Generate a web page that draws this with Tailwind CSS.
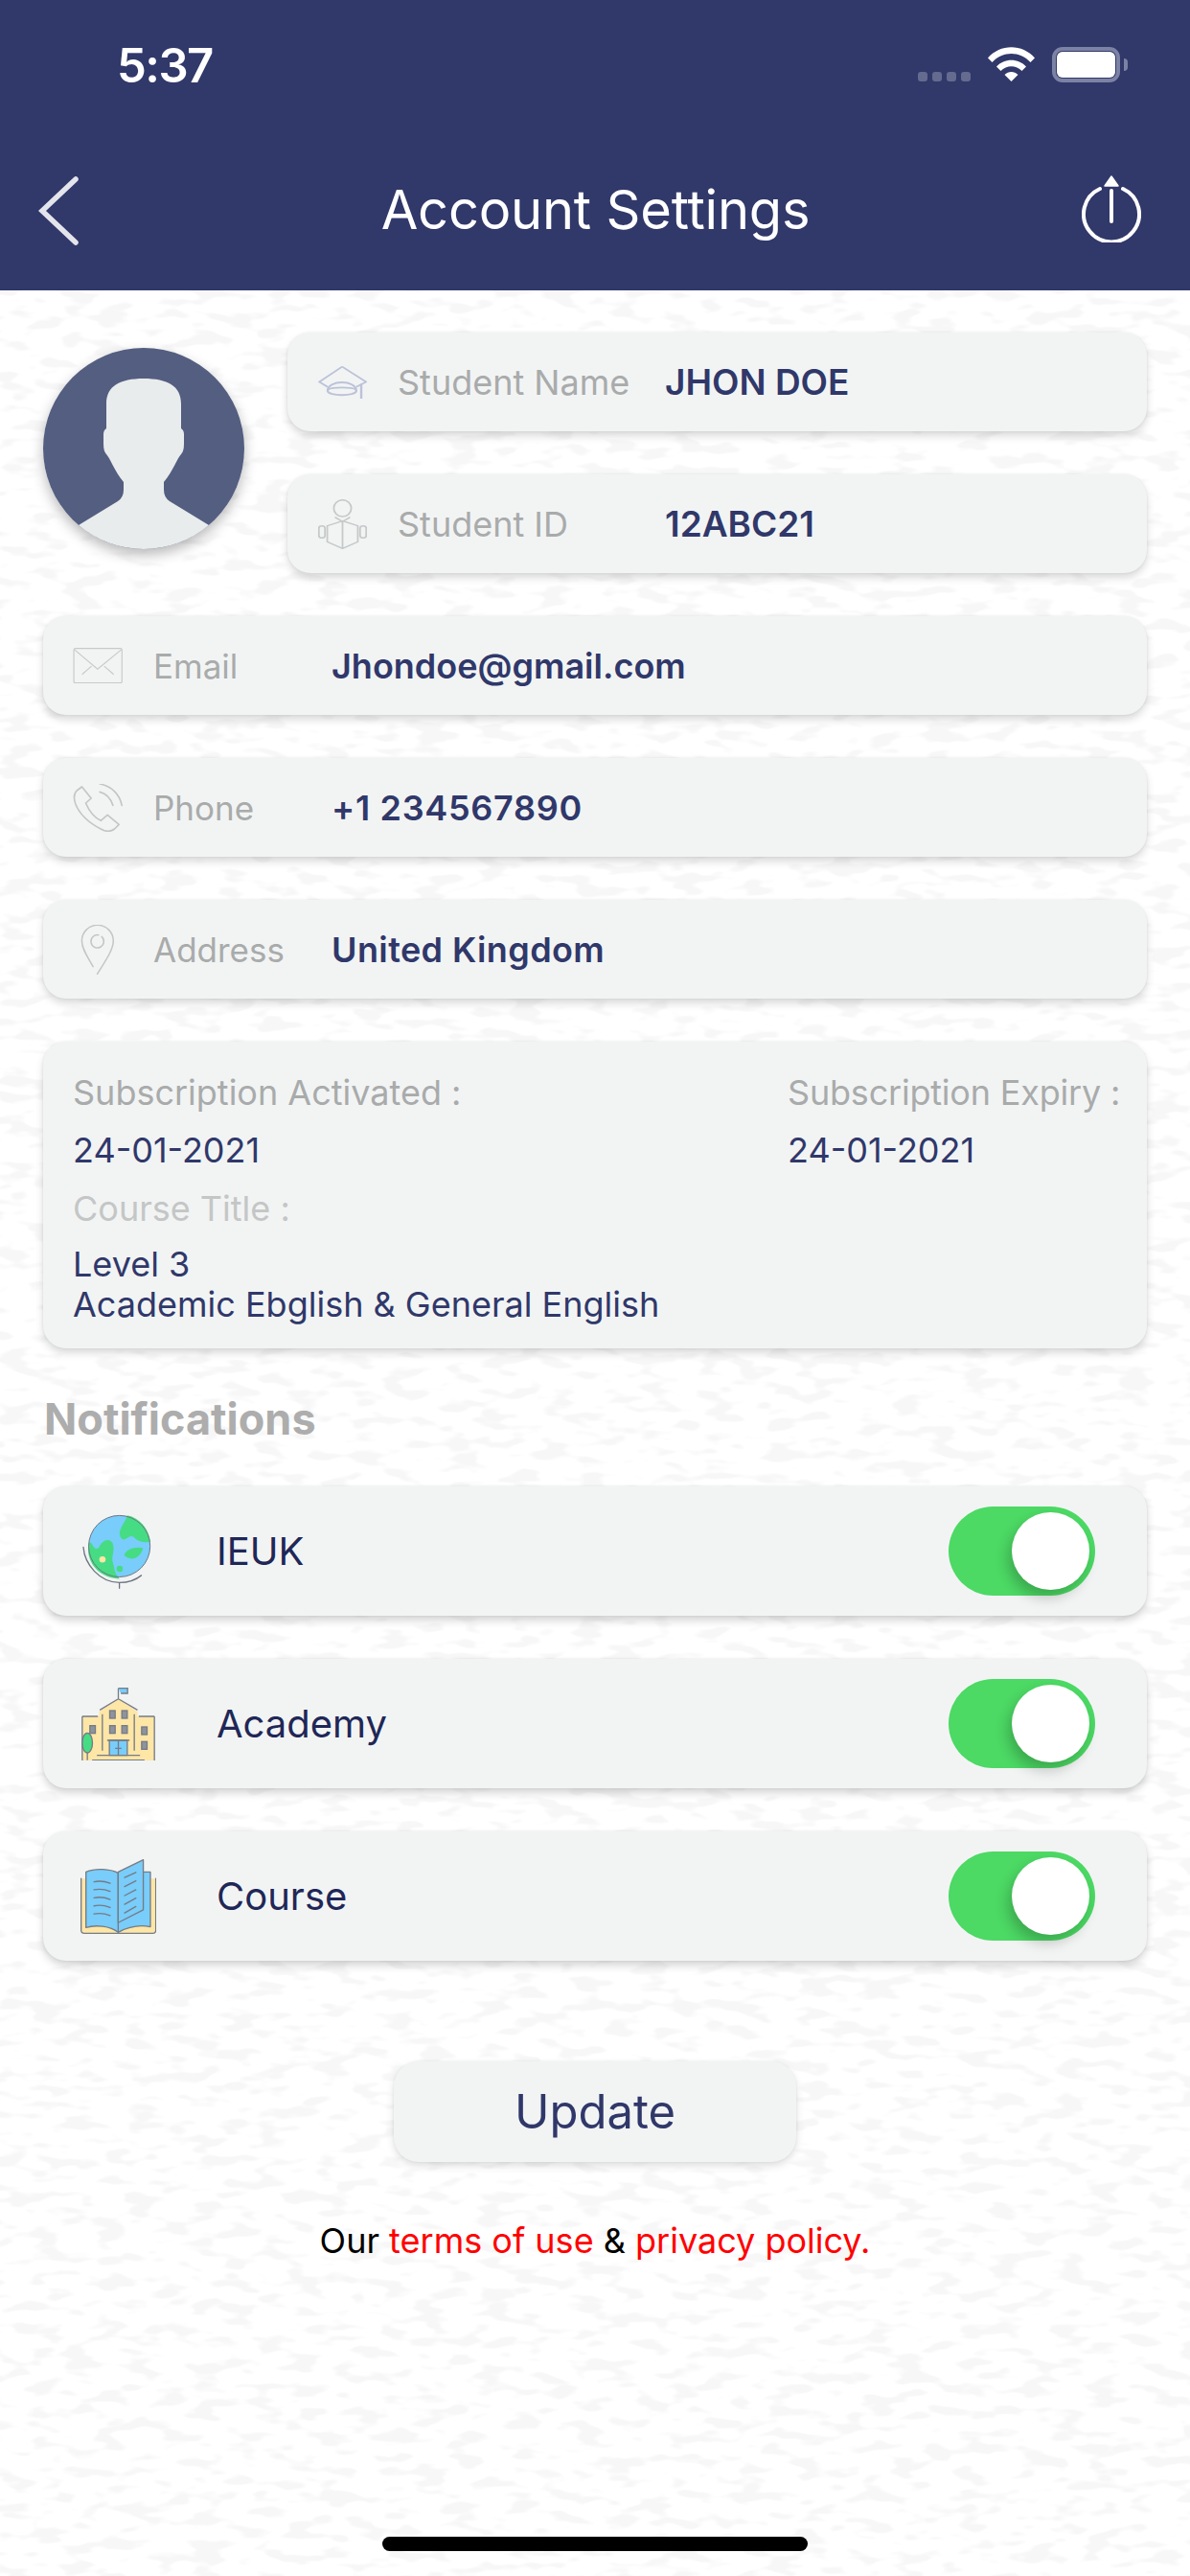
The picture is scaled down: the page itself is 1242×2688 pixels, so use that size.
<!DOCTYPE html>
<html lang="en">
<head>
    <meta charset="UTF-8">
    <meta name="viewport" content="width=device-width, initial-scale=1.0">
    <title>Account Settings</title>
    <script src="https://cdn.jsdelivr.net/npm/@tailwindcss/browser@4"></script>
</head>
<body class="bg-white">
<div class="relative w-[1242px] h-[2688px] overflow-hidden bg-white font-[family-name:Inter,sans-serif]">
    <!-- paper texture behind everything -->
    <svg class="absolute inset-0" width="1242" height="2688">
        <filter id="paper" x="0" y="0" width="100%" height="100%" color-interpolation-filters="sRGB">
            <feTurbulence type="fractalNoise" baseFrequency="0.03 0.08" numOctaves="2" seed="7"/>
            <feColorMatrix values="0 0 0 0 0.968  0 0 0 0 0.968  0 0 0 0 0.968  1 0 0 0 0"/>
            <feComponentTransfer><feFuncA type="linear" slope="8" intercept="-4.2"/></feComponentTransfer>
        </filter>
        <rect width="1242" height="2688" filter="url(#paper)"/>
    </svg>

    <div class="relative flex flex-col h-full">
        <!-- Header -->
        <header class="h-[303px] shrink-0 bg-[#31386a] text-white">
            <div class="flex items-start h-[172px] pt-[40px] pl-[122px] pr-[65px]">
                <span class="text-[49px] leading-[58px] font-semibold tracking-[-1.5px]">5:37</span>
                <div class="ml-auto flex items-start">
                    <div class="flex gap-[5px] mt-[35px] mr-[18px]">
                        <span class="w-[10px] h-[10px] rounded-[3px] bg-[#646b8f]"></span>
                        <span class="w-[10px] h-[10px] rounded-[3px] bg-[#646b8f]"></span>
                        <span class="w-[10px] h-[10px] rounded-[3px] bg-[#646b8f]"></span>
                        <span class="w-[10px] h-[10px] rounded-[3px] bg-[#646b8f]"></span>
                    </div>
                    <svg class="mt-[9px]" width="49" height="36" viewBox="0 0 49 36" fill="white">
                        <path d="M0 11.5C13-3.5 36-3.5 49 11.5L44.5 16C33.500 4 15.500 4 4.500 16Z"/>
                        <path d="M9 20.500C17 11.500 32 11.500 40 20.500L35.500 25C29.500 18.500 19.500 18.500 13.500 25Z"/>
                        <path d="M17.500 29C21.500 25 27.500 25 31.500 29L24.500 36Z"/>
                    </svg>
                    <div class="flex items-center ml-[18px] mt-[9px]">
                        <div class="w-[71px] h-[37px] rounded-[11px] border-[4px] border-[#7c82a3] p-[1px]">
                            <div class="w-full h-full rounded-[6px] bg-white"></div>
                        </div>
                        <div class="w-[4px] h-[13px] ml-[4px] rounded-r-[4px] bg-[#7c82a3]"></div>
                    </div>
                </div>
            </div>
            <div class="flex items-center justify-between h-[100px] pl-[40px] pr-[51px]">
                <svg width="42" height="72" viewBox="0 0 42 72" fill="none" stroke="#e4e5ec" stroke-width="5.500" stroke-linecap="round" class="mt-[-4px]">
                    <path d="M39 3L4 36L39 69"/>
                </svg>
                <h1 class="ml-[32px] mt-[-6px] text-[56px] leading-[70px] font-normal tracking-[-0.2px]">Account Settings</h1>
                <svg width="62" height="70" viewBox="0 0 62 70" fill="none" stroke="white" stroke-linecap="round" class="mt-[-8px]">
                    <path d="M19 14A29 29 0 1 0 43 14" stroke-width="4"/>
                    <path d="M31 16V48" stroke-width="4"/>
                    <path d="M31 1L38 11H24Z" fill="white" stroke-width="1.500" stroke-linejoin="round"/>
                </svg>
            </div>
        </header>

        <main class="flex flex-col px-[45px] pt-[44px]">
            <!-- Avatar and student rows -->
            <div class="flex items-start">
                <div class="w-[210px] h-[210px] mt-[16px] rounded-full shadow-[0_6px_14px_rgba(0,0,0,0.28)]">
                    <svg width="210" height="210" viewBox="0 0 210 210">
                        <circle cx="105" cy="105" r="105" fill="#535e80"/>
                        <path d="M37 185L78 160Q84 156 84 148V140C74 128 70 115 66 111Q63 108 63 100V90Q63 86 66 84V58C66 40 80 32 105 32C130 32 144 40 144 58V84Q147 86 147 90V100Q147 108 144 111C140 115 136 128 126 140V148Q126 156 132 160L173 185A105 105 0 0 1 37 185Z" fill="#e8ecec"/>
                    </svg>
                </div>
                <div class="flex flex-col gap-[45px] ml-[45px] flex-1">
                    <div class="flex items-center h-[103px] pl-[32px] rounded-[24px] bg-[#f2f4f4] shadow-[0_5px_9px_rgba(0,0,0,0.15),0_0_3px_rgba(0,0,0,0.07)]">
                        <svg class="w-[51px] h-[34px] shrink-0" viewBox="790 162 128 103" preserveAspectRatio="none" fill="none" stroke="#bcc3d8" stroke-width="5">
                            <path d="M853 164L793 212L815 228M853 164L916 212L890 228"/>
                            <path d="M815 240C815 205 890 205 890 240C890 258 815 258 815 240Z" stroke-width="6"/>
                            <path d="M815 236C830 228 875 228 890 236" stroke-width="5"/>
                            <path d="M903 218V265" stroke-width="6"/>
                        </svg>
                        <span class="w-[279px] ml-[32px] shrink-0 text-[36px] leading-[44px] text-[#a9abab]">Student Name</span>
                        <span class="text-[37px] leading-[44px] font-semibold text-[#30386a]">JHON DOE</span>
                    </div>
                    <div class="flex items-center h-[103px] pl-[32px] rounded-[24px] bg-[#f2f4f4] shadow-[0_5px_9px_rgba(0,0,0,0.15),0_0_3px_rgba(0,0,0,0.07)]">
                        <svg class="w-[51px] h-[52px] shrink-0" viewBox="788 572 128 156" preserveAspectRatio="none" fill="none" stroke="#c6c9c9" stroke-width="4.500">
                            <ellipse cx="852" cy="600" rx="23" ry="26"/>
                            <path d="M852 640L812 655V705L852 726L892 705V655ZM852 640V726"/>
                            <path d="M832 628L852 642L872 628"/>
                            <rect x="790" y="655" width="16" height="38" rx="8"/>
                            <rect x="898" y="655" width="16" height="38" rx="8"/>
                        </svg>
                        <span class="w-[279px] ml-[32px] shrink-0 text-[36px] leading-[44px] text-[#a9abab]">Student ID</span>
                        <span class="text-[37px] leading-[44px] font-semibold text-[#30386a]">12ABC21</span>
                    </div>
                </div>
            </div>

            <!-- Contact rows -->
            <div class="flex flex-col gap-[45px] mt-[45px]">
                <div class="flex items-center h-[103px] rounded-[24px] bg-[#f2f4f4] shadow-[0_5px_9px_rgba(0,0,0,0.15),0_0_3px_rgba(0,0,0,0.07)]">
                    <div class="flex justify-center w-[115px] pl-[31px] pr-[32px] shrink-0">
                        <svg class="w-[52px] h-[37px]" viewBox="138 138 155 112" fill="none" stroke="#c8caca" stroke-width="3.500">
                            <rect x="140" y="140" width="152" height="109" rx="5"/>
                            <path d="M141 143L215 205L291 143M166 222L196 196M266 222L236 196"/>
                        </svg>
                    </div>
                    <span class="w-[186px] shrink-0 text-[35px] leading-[44px] text-[#a9abab]">Email</span>
                    <span class="text-[36px] leading-[44px] font-semibold text-[#30386a]">Jhondoe@gmail.com</span>
                </div>
                <div class="flex items-center h-[103px] rounded-[24px] bg-[#f2f4f4] shadow-[0_5px_9px_rgba(0,0,0,0.15),0_0_3px_rgba(0,0,0,0.07)]">
                    <div class="flex justify-center w-[115px] pl-[31px] pr-[32px] shrink-0">
                        <svg class="w-[52px] h-[50px]" viewBox="138 565 155 150" fill="none" stroke="#c4c6c6" stroke-width="5" stroke-linejoin="round" stroke-linecap="round">
                            <path d="M166 574L150 586Q136 600 146 628Q165 675 225 706Q250 720 268 706L282 692L246 662L225 680Q195 665 178 625L195 610Z"/>
                            <path d="M222 565C258 572 284 596 291 632M222 590C242 595 256 610 263 632"/>
                        </svg>
                    </div>
                    <span class="w-[186px] shrink-0 text-[35px] leading-[44px] text-[#a9abab]">Phone</span>
                    <span class="text-[36px] leading-[44px] font-semibold tracking-[0.7px] text-[#30386a]">+1 234567890</span>
                </div>
                <div class="flex items-center h-[103px] rounded-[24px] bg-[#f2f4f4] shadow-[0_5px_9px_rgba(0,0,0,0.15),0_0_3px_rgba(0,0,0,0.07)]">
                    <div class="flex justify-center w-[115px] pl-[31px] pr-[32px] shrink-0">
                        <svg class="w-[36px] h-[52px]" viewBox="163 1005 107 155" fill="none" stroke="#c4c6c6" stroke-width="4.500" stroke-linecap="round">
                            <path d="M202 1135C185 1105 167 1080 167 1055A49 49 0 1 1 265 1055C265 1085 235 1125 215 1158"/>
                            <path d="M229 1042A20 20 0 1 1 219 1037"/>
                        </svg>
                    </div>
                    <span class="w-[186px] shrink-0 text-[35px] leading-[44px] text-[#a9abab]">Address</span>
                    <span class="text-[36px] leading-[44px] font-semibold tracking-[0.4px] text-[#30386a]">United Kingdom</span>
                </div>

                <!-- Subscription -->
                <div class="flex justify-between h-[320px] pt-[32px] pl-[31px] rounded-[24px] bg-[#f2f4f4] shadow-[0_5px_9px_rgba(0,0,0,0.15),0_0_3px_rgba(0,0,0,0.07)] text-[36px] leading-[42px] text-[#30386a]">
                    <div>
                        <p class="text-[#a9abab]">Subscription Activated :</p>
                        <p class="mt-[18px]">24-01-2021</p>
                        <p class="mt-[19px] text-[#c4c6c6]">Course Title :</p>
                        <p class="mt-[16px]">Level 3<br>Academic Ebglish &amp; General English</p>
                    </div>
                    <div class="w-[375px]">
                        <p class="text-[#a9abab] tracking-[-0.2px]">Subscription Expiry :</p>
                        <p class="mt-[18px]">24-01-2021</p>
                    </div>
                </div>
            </div>

            <!-- Notifications -->
            <h2 class="mt-[48px] ml-[1px] text-[45px] leading-[52px] font-bold text-[#adadad]">Notifications</h2>
            <div class="flex flex-col gap-[45px] mt-[44px]">
                <div class="flex items-center h-[135px] pl-[41px] pr-[54px] rounded-[24px] bg-[#f2f4f4] shadow-[0_5px_9px_rgba(0,0,0,0.17),0_0_3px_rgba(0,0,0,0.07)]">
                    <svg class="w-[72px] h-[78px] shrink-0" viewBox="135 120 220 238" fill="none">
                        <circle cx="253" cy="222" r="98" fill="#78cdfa"/>
                        <path d="M278 124C272 148 246 170 256 192C268 218 284 178 300 194C312 208 336 212 352 208C346 165 318 132 278 124Z" fill="#46dc84"/>
                        <path d="M155 212C166 200 170 242 188 226C196 204 222 192 232 214C240 240 224 255 234 280C238 300 240 312 254 326C205 324 166 298 155 250C153 238 153 224 155 212Z" fill="#46dc84"/>
                        <path d="M268 250C276 230 306 222 328 228C322 258 288 274 268 250Z" fill="#46dc84"/>
                        <circle cx="254" cy="294" r="10" fill="#46dc84"/>
                        <circle cx="199" cy="264" r="10" fill="#fde6a6"/>
                        <circle cx="253" cy="222" r="98" stroke="#6e7480" stroke-width="3"/>
                        <path d="M138 225C142 280 190 338 253 338C280 338 305 330 323 315M253 338V356" stroke="#6e7480" stroke-width="4" stroke-linecap="round"/>
                    </svg>
                    <span class="ml-[68px] text-[40px] leading-[52px] text-[#1f2757]">IEUK</span>
                    <div class="relative ml-auto w-[153px] h-[93px] rounded-full bg-[#4cd964] flex items-center justify-end pr-[6px]">
                        <span class="w-[81px] h-[81px] rounded-full bg-white shadow-[-4px_8px_14px_rgba(0,0,0,0.22)]"></span>
                    </div>
                </div>
                <div class="flex items-center h-[135px] pl-[40px] pr-[54px] rounded-[24px] bg-[#f2f4f4] shadow-[0_5px_9px_rgba(0,0,0,0.17),0_0_3px_rgba(0,0,0,0.07)]">
                    <svg class="w-[77px] h-[76px] shrink-0" viewBox="135 665 230 228" fill="none" stroke="#767b85" stroke-width="4">
                        <path d="M137 755H190V740L250 700L310 740V755H363V893H137Z" fill="#fde6a6" stroke="none"/>
                        <path d="M137 755H186M137 755V893M363 755V893M314 755H363M200 748V862M300 748V862M192 735L250 700L310 735M250 700V667"/>
                        <path d="M250 667H279V683H258" fill="#78cdfa"/>
                        <path d="M222 830H278V877H222Z" fill="#78cdfa"/>
                        <path d="M215 830H285M250 830V877M240 855H260M183 877H318M168 892H332"/>
                        <rect x="223" y="737" width="17" height="24" fill="#8e939c"/>
                        <rect x="261" y="737" width="17" height="24" fill="#8e939c"/>
                        <rect x="223" y="784" width="17" height="24" fill="#8e939c"/>
                        <rect x="261" y="784" width="17" height="24" fill="#8e939c"/>
                        <rect x="323" y="788" width="17" height="24" fill="#8e939c"/>
                        <rect x="323" y="834" width="17" height="24" fill="#8e939c"/>
                        <rect x="161" y="784" width="17" height="24" fill="#8e939c"/>
                        <path d="M153 868V892"/>
                        <ellipse cx="153" cy="838" rx="16" ry="31" fill="#46dc84"/>
                    </svg>
                    <span class="ml-[64px] text-[40px] leading-[52px] text-[#1f2757]">Academy</span>
                    <div class="relative ml-auto w-[153px] h-[93px] rounded-full bg-[#4cd964] flex items-center justify-end pr-[6px]">
                        <span class="w-[81px] h-[81px] rounded-full bg-white shadow-[-4px_8px_14px_rgba(0,0,0,0.22)]"></span>
                    </div>
                </div>
                <div class="flex items-center h-[135px] pl-[39px] pr-[54px] rounded-[24px] bg-[#f2f4f4] shadow-[0_5px_9px_rgba(0,0,0,0.17),0_0_3px_rgba(0,0,0,0.07)]">
                    <svg class="w-[79px] h-[78px] shrink-0" viewBox="133 1205 235 232" fill="none" stroke="#767b85" stroke-width="4" stroke-linecap="round" stroke-linejoin="round">
                        <path d="M135 1265V1425Q135 1435 145 1435H358Q367 1435 367 1425V1265Z" fill="#fde6a6" stroke="none"/>
                        <path d="M135 1265V1425Q135 1435 145 1435H358Q367 1435 367 1425V1265"/>
                        <path d="M328 1245H350V1415Q300 1405 250 1432V1402Z" fill="#78cdfa"/>
                        <path d="M150 1245C180 1232 225 1235 250 1248V1432C225 1412 180 1408 150 1417Z" fill="#78cdfa"/>
                        <path d="M250 1245L328 1207V1362L250 1402Z" fill="#78cdfa"/>
                        <path d="M175 1275Q200 1270 225 1280M175 1300Q200 1295 225 1305M175 1325Q200 1320 225 1330M175 1350Q200 1345 225 1355M175 1375Q200 1370 225 1380"/>
                        <path d="M270 1262L305 1246M270 1290L305 1272M270 1318L305 1300M270 1345L305 1326M270 1372L305 1352"/>
                    </svg>
                    <span class="ml-[63px] text-[40px] leading-[52px] text-[#1f2757]">Course</span>
                    <div class="relative ml-auto w-[153px] h-[93px] rounded-full bg-[#4cd964] flex items-center justify-end pr-[6px]">
                        <span class="w-[81px] h-[81px] rounded-full bg-white shadow-[-4px_8px_14px_rgba(0,0,0,0.22)]"></span>
                    </div>
                </div>
            </div>

            <!-- Update -->
            <button class="self-center flex items-center justify-center w-[420px] h-[105px] mt-[105px] rounded-[26px] bg-[#f2f4f4] shadow-[0_4px_9px_rgba(0,0,0,0.13),0_0_3px_rgba(0,0,0,0.06)] text-[49px] text-[#30386a]">Update</button>
            <p class="mt-[60px] text-center text-[36px] leading-[44px] text-black">Our <span class="text-[#ff0000]">terms of use</span> &amp; <span class="text-[#ff0000]">privacy policy.</span></p>
        </main>

        <!-- Home indicator -->
        <div class="self-center mt-auto mb-[26px] w-[444px] h-[15px] rounded-full bg-black"></div>
    </div>
</div>
</body>
</html>
